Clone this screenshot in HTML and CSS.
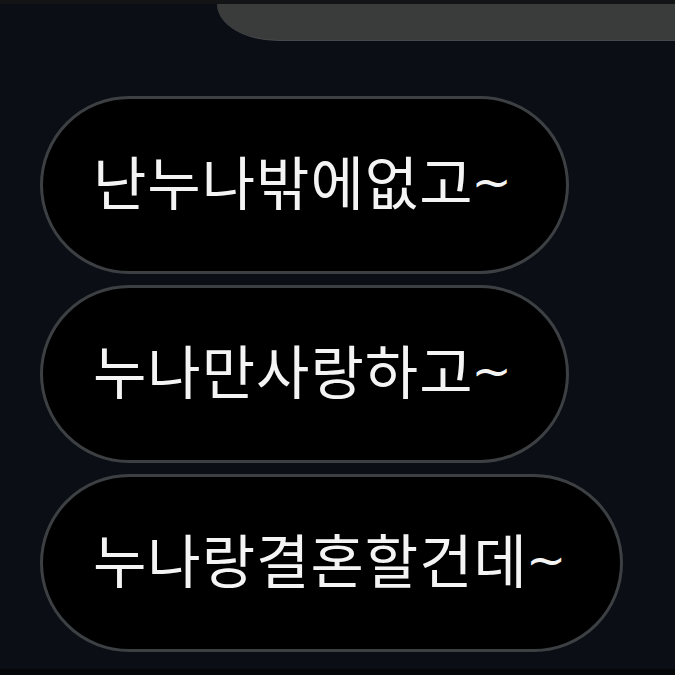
FILE: index.html
```html
<!DOCTYPE html>
<html lang="ko">
<head>
    <meta charset="UTF-8">
    <meta name="viewport" content="width=device-width, initial-scale=1.0">
    <title>채팅</title>
    <link rel="stylesheet" href="styles.css">
</head>
<body>
    <div class="topbar">
        <div class="tab"></div>
    </div>

    <div class="messages">
        <div class="bubble">난누나밖에없고<span class="tilde">~</span></div>
        <div class="bubble">누나만사랑하고<span class="tilde">~</span></div>
        <div class="bubble">누나랑결혼할건데<span class="tilde">~</span></div>
    </div>

    <div class="bottombar"></div>
</body>
</html>
```

FILE: styles.css
```css
body {
    margin: 0;
    height: 675px;
    overflow: hidden;
    background-color: #0b0f15;
    font-family: "Noto Sans CJK KR", "Noto Sans", sans-serif;
}
.topbar {
    height: 37px;
    border-top: 4px solid #131416;
    display: flex;
}
.tab {
    flex: 1;
    margin-left: 217px;
    background: #3a3b3b;
    border-bottom: 1px solid #45484b;
    border-bottom-left-radius: 62px 37px;
}
.messages {
    display: flex;
    flex-direction: column;
    align-items: flex-start;
    gap: 11px;
    margin-top: 55px;
    padding-left: 40px;
}
.bubble {
    height: 178px;
    box-sizing: border-box;
    display: flex;
    align-items: center;
    padding: 0 58px 10px 50px;
    background: #000;
    border: 3px solid #3d4043;
    border-radius: 90px;
    color: #f4f4f4;
    font-size: 58px;
    letter-spacing: 1px;
    white-space: nowrap;
}
.tilde {
    font-family: "DejaVu Sans", sans-serif;
    font-size: 48px;
    letter-spacing: 0;
    margin: 4px -4px 0 -2px;
}
.bottombar {
    margin-top: 17px;
    height: 10px;
    background: #050608;
}
```
